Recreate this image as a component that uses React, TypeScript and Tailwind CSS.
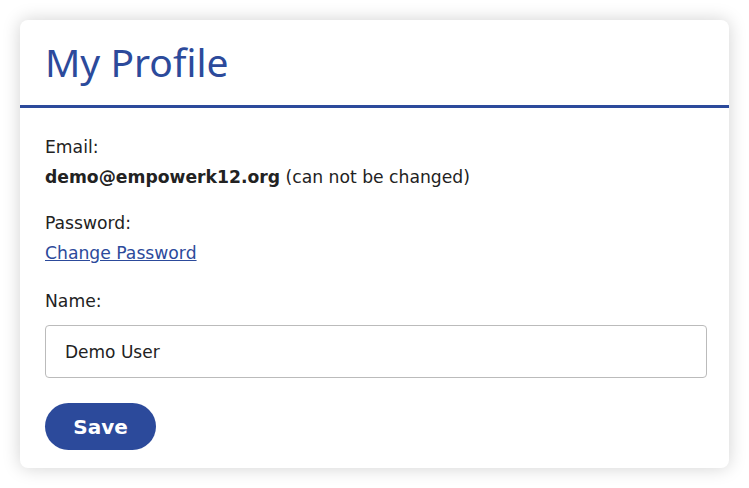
export default function App() {
  return (
    <div className="min-h-screen bg-white p-5 font-['DejaVu_Sans',sans-serif] text-[#222]">
      <div className="rounded-lg bg-white shadow-[0_0_18px_rgba(0,0,0,0.18)]">
        {/* header */}
        <div className="border-b-[3px] border-[#2c4a9b] px-[25px] pt-[19px] pb-[21px]">
          <h1 className="font-['Noto_Sans',sans-serif] text-[39px] leading-[45px] text-[#2c4a9b]">
            My Profile
          </h1>
        </div>

        <div className="px-[25px] pt-[24px] pb-[18px] text-[17.2px] leading-[30px]">
          <div>
            <p>Email:</p>
            <p>
              <strong className="font-bold">demo@empowerk12.org</strong> (can not be changed)
            </p>
          </div>

          <div className="mt-[16px]">
            <p>Password:</p>
            <a href="#" className="text-[#2c4a9b] underline">
              Change Password
            </a>
          </div>

          <div className="mt-[18px]">
            <label className="block">Name:</label>
            <input
              type="text"
              defaultValue="Demo User"
              className="mt-[9px] h-[53px] w-[calc(100%+3px)] rounded border border-[#bbb] px-[19px] text-[17px] text-[#222] outline-none"
            />
          </div>

          <button className="mt-[25px] h-[47px] w-[111px] rounded-full bg-[#2c4a9b] text-[20px] font-bold text-white">
            Save
          </button>
        </div>
      </div>
    </div>
  );
}
